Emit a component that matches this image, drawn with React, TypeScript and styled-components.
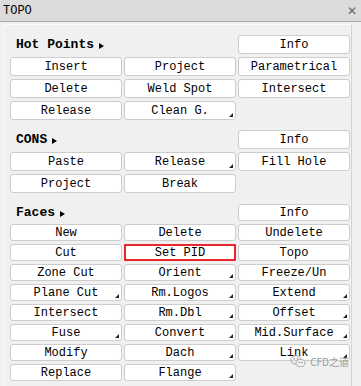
import styled, { createGlobalStyle } from 'styled-components';

const GlobalStyle = createGlobalStyle`
  html, body {
    margin: 0;
    padding: 0;
    background: #f0f0f0;
  }
`;

const Window = styled.div`
  position: relative;
  width: 361px;
  height: 386px;
  overflow: hidden;
  background-color: #f0f0f0;
  font-family: 'Liberation Mono', 'DejaVu Sans Mono', monospace;
  color: #000;
`;
const TitleBar = styled.div`
  display: flex;
  align-items: center;
  justify-content: space-between;
  height: 22px;
  padding: 0 4px 0 3px;
  box-sizing: border-box;
  background-color: #dcdcdc;
  border-bottom: 1px solid #a8a8a8;
  font-size: 12px;
`;
const CloseMark = styled.span`
  color: #666;
  font-family: 'DejaVu Sans', sans-serif;
  font-size: 12px;
`;
const Panel = styled.div`
  display: flex;
  flex-direction: column;
  gap: 10px;
  margin: 2px 9px 0 3px;
  padding: 10px 0 0 6px;
  height: 380px;
  box-sizing: border-box;
  background-color: #f0f0f0;
  border-left: 1px solid #fafafa;
  border-top: 1px solid #fafafa;
  border-right: 1px solid #d4d4d4;
`;
const Section = styled.div<{ $rowHeight: number }>`
  display: grid;
  grid-template-columns: 112px 112px 112px;
  grid-auto-rows: ${({ $rowHeight }) => $rowHeight}px;
  column-gap: 2px;
  row-gap: 3px;
  &:last-child {
    margin-top: 1px;
  }
`;
const SectionTitle = styled.div`
  grid-column: span 2;
  display: flex;
  align-items: center;
  gap: 5px;
  padding-left: 6px;
  font-size: 13px;
  font-weight: bold;
`;
const Arrow = styled.span`
  width: 0;
  height: 0;
  border-top: 3px solid transparent;
  border-bottom: 3px solid transparent;
  border-left: 5px solid #000;
  margin-top: 2px;
`;
const Button = styled.div<{ $selected?: boolean }>`
  position: relative;
  display: flex;
  align-items: center;
  justify-content: center;
  box-sizing: border-box;
  background-color: #fff;
  border: ${({ $selected }) => ($selected ? '2px solid #e8262b' : '1px solid #cdcdcd')};
  border-radius: ${({ $selected }) => ($selected ? '0' : '3px')};
  font-size: 12px;
  white-space: nowrap;
`;
const Corner = styled.span`
  position: absolute;
  right: 2px;
  bottom: 2px;
  width: 0;
  height: 0;
  border-left: 4px solid transparent;
  border-bottom: 4px solid #222;
`;
const Empty = styled.div``;
const Watermark = styled.div`
  position: absolute;
  right: 12px;
  bottom: 17px;
  display: flex;
  align-items: center;
  gap: 4px;
  color: #9a9a9a;
  font-family: 'Noto Sans CJK SC', 'DejaVu Sans', sans-serif;
  font-size: 10px;
`;

type Cell = { label: string; more?: boolean; selected?: boolean } | null;

const hotPoints: Cell[] = [
  { label: 'Insert' }, { label: 'Project' }, { label: 'Parametrical' },
  { label: 'Delete' }, { label: 'Weld Spot' }, { label: 'Intersect' },
  { label: 'Release' }, { label: 'Clean G.', more: true }, null,
];
const cons: Cell[] = [
  { label: 'Paste' }, { label: 'Release', more: true }, { label: 'Fill Hole' },
  { label: 'Project' }, { label: 'Break' }, null,
];
const faces: Cell[] = [
  { label: 'New' }, { label: 'Delete' }, { label: 'Undelete' },
  { label: 'Cut' }, { label: 'Set PID', selected: true }, { label: 'Topo' },
  { label: 'Zone Cut' }, { label: 'Orient', more: true }, { label: 'Freeze/Un' },
  { label: 'Plane Cut', more: true }, { label: 'Rm.Logos', more: true }, { label: 'Extend', more: true },
  { label: 'Intersect' }, { label: 'Rm.Dbl', more: true }, { label: 'Offset', more: true },
  { label: 'Fuse', more: true }, { label: 'Convert', more: true }, { label: 'Mid.Surface', more: true },
  { label: 'Modify' }, { label: 'Dach', more: true }, { label: 'Link', more: true },
  { label: 'Replace' }, { label: 'Flange', more: true }, null,
];

const sections = [
  { title: 'Hot Points', rowHeight: 19, cells: hotPoints },
  { title: 'CONS', rowHeight: 19, cells: cons },
  { title: 'Faces', rowHeight: 17, cells: faces },
];

const WeChatIcon = () => (
  <svg width="16" height="13" viewBox="0 0 16 13" fill="none" stroke="#a8a8a8" strokeWidth="1">
    <ellipse cx="6" cy="5" rx="5.2" ry="4.2" />
    <ellipse cx="10.5" cy="8" rx="4.5" ry="3.6" fill="#f0f0f0" />
    <circle cx="4.3" cy="3.8" r="0.6" fill="#a8a8a8" />
    <circle cx="7.6" cy="3.8" r="0.6" fill="#a8a8a8" />
    <circle cx="9.2" cy="7.4" r="0.5" fill="#a8a8a8" />
    <circle cx="11.8" cy="7.4" r="0.5" fill="#a8a8a8" />
  </svg>
);

export default function App() {
  return (
    <Window>
      <GlobalStyle />
      <TitleBar>
        <span>TOPO</span>
        <CloseMark>✕</CloseMark>
      </TitleBar>
      <Panel>
        {sections.map((section) => (
          <Section key={section.title} $rowHeight={section.rowHeight}>
            <SectionTitle>
              {section.title}
              <Arrow />
            </SectionTitle>
            <Button>Info</Button>
            {section.cells.map((cell, index) =>
              cell ? (
                <Button key={index} $selected={cell.selected}>
                  {cell.label}
                  {cell.more && <Corner />}
                </Button>
              ) : (
                <Empty key={index} />
              ),
            )}
          </Section>
        ))}
      </Panel>
      <Watermark>
        <WeChatIcon />
        CFD之道
      </Watermark>
    </Window>
  );
}
